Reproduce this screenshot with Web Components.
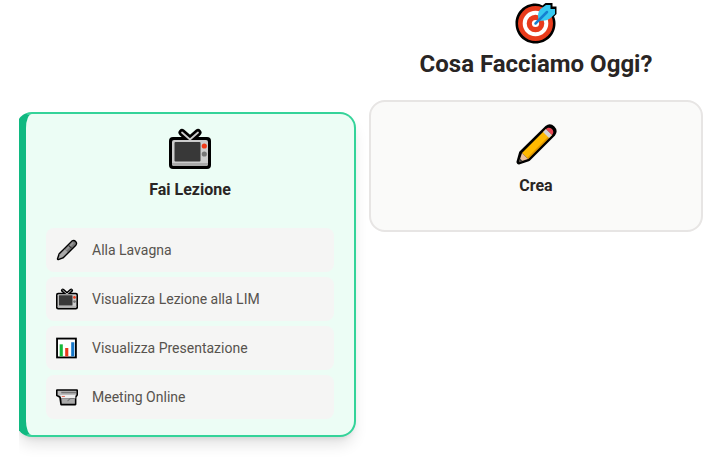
<!DOCTYPE html>
<html lang="it">
<head>
  <meta charset="utf-8">
  <meta name="viewport" content="width=device-width, initial-scale=1">
  <title>Cosa Facciamo Oggi?</title>
  <style>
    body {
      margin: 0;
      background: #fff;
      color: #292524;
      font-family: Roboto, "Liberation Sans", sans-serif;
    }
  </style>
</head>
<body>
  <today-board>
    <action-card slot="lesson" icon="tv" label="Fai Lezione" active>
      <action-item icon="pen">Alla Lavagna</action-item>
      <action-item icon="tv">Visualizza Lezione alla LIM</action-item>
      <action-item icon="chart">Visualizza Presentazione</action-item>
      <action-item icon="camera">Meeting Online</action-item>
    </action-card>
    <board-title slot="title" icon="target">Cosa Facciamo Oggi?</board-title>
    <action-card slot="create" icon="pencil" label="Crea"></action-card>
  </today-board>

  <script>
    // all icons share a 42x42 viewBox
    const ICONS = {
      target: `
        <path d="M20.500 1.500C9 1.500.5 10.500.5 21.500S9 41.500 20.500 41.500s20-9 20-20c0-3-.5-5-1.500-7l2.500-2.500V4.500h-4V1h-7l-3 2.500c-2-1.300-4.500-2-7-2z" fill="#000"/>
        <circle cx="20.500" cy="21.500" r="17.500" fill="#e83b1c"/>
        <circle cx="20.500" cy="21.500" r="10.800" fill="none" stroke="#fff" stroke-width="4"/>
        <circle cx="20.500" cy="21.500" r="3.600" fill="#fff"/>
        <path d="M23.500 17.500c-1-4-.5-8 2-10.500L31 3h4.500v4h4.500v5l-5 4.500c-3 2-7 2.500-10.500 2z" fill="#37c8f0"/>
        <path d="M20.500 21.500L32 10" stroke="#1680d0" stroke-width="2.500" stroke-linecap="round"/>`,
      tv: `
        <path d="M13 4.500L21 11.500 29 4.500" fill="none" stroke="#000" stroke-width="7" stroke-linecap="round" stroke-linejoin="round"/>
        <rect x="0" y="9" width="42" height="32" rx="4" fill="#000"/>
        <path d="M13 4.500L21 11.500 29 4.500" fill="none" stroke="#ccc" stroke-width="1.800" stroke-linecap="round"/>
        <rect x="3" y="12" width="36" height="26" rx="2" fill="#ccc"/>
        <path d="M3 35h36v1a2 2 0 0 1-2 2H5a2 2 0 0 1-2-2z" fill="#aaa"/>
        <rect x="5.500" y="14" width="26" height="19.500" rx="1" fill="#383838"/>
        <circle cx="35.300" cy="18" r="2.600" fill="#f03a17"/>
        <circle cx="35.300" cy="26" r="2.600" fill="#767676"/>`,
      pencil: `
        <path d="M4 38l2.500-9L32 4c4-3 9 2 6 6L13 35z" fill="#000" stroke="#000" stroke-width="5" stroke-linejoin="round"/>
        <path d="M7 29L31 5l6 6-24 24z" fill="#ffb900"/>
        <path d="M12 34L36 10l1 1-24 24z" fill="#dc9300"/>
        <path d="M7 29l6 6-9 3z" fill="#ecc19c"/>
        <path d="M5 34.500L7.500 37 4 38z" fill="#383838"/>
        <path d="M28 8l3-3 6 6-3 3z" fill="#d2d2d2"/>
        <path d="M31 5c4-4 10 2 6 6z" fill="#e74856"/>`,
      pen: `
        <path d="M4 38l3-9L31 5c4-3 9 2 6 6L13 35z" fill="#000" stroke="#000" stroke-width="5" stroke-linejoin="round"/>
        <path d="M4 38l3-9L31 5c4-3 9 2 6 6L13 35z" fill="#777"/>
        <path d="M5 37l3-8 9-9 5 5-9 9z" fill="#aaa"/>
        <path d="M19 21L33 7" stroke="#999" stroke-width="3"/>
        <path d="M24 12l6 6" stroke="#333" stroke-width="2"/>`,
      chart: `
        <rect x="2" y="3" width="36" height="36" fill="#fff" stroke="#000" stroke-width="3.500"/>
        <path d="M7 37V14h6v23z" fill="#16b83b"/>
        <path d="M17.500 37V21h6v16z" fill="#e83b1c"/>
        <path d="M29 37V10h6v27z" fill="#1677c9"/>`,
      camera: `
        <path d="M2 8h38v9l-3 4v14H10l-2-14-6-3z" fill="#000" stroke="#000" stroke-width="4" stroke-linejoin="round"/>
        <path d="M3 9h36v8l-4 3H9l-6-3z" fill="#bbb"/>
        <path d="M10 11h28v3H10z" fill="#777"/>
        <path d="M8 17h29v7H10z" fill="#eee"/>
        <path d="M10 24h26v10H11z" fill="#aaa"/>
        <path d="M11 20h6" stroke="#e8705c" stroke-width="2"/>
        <path d="M22 29l5-5h8" fill="none" stroke="#777" stroke-width="2"/>`
    };

    class EmojiIcon extends HTMLElement {
      constructor() {
        super();
        this.attachShadow({mode: "open"});
      }

      connectedCallback() {
        this.shadowRoot.innerHTML = `
          <style>
            :host {
              display: block;
              flex: none;
              width: var(--icon-size, 42px);
              height: var(--icon-size, 42px);
            }
            svg {
              display: block;
              width: 100%;
              height: 100%;
            }
          </style>
          <svg viewBox="0 0 42 42" aria-hidden="true">${ICONS[this.getAttribute("name")]}</svg>
        `;
      }
    }

    class BoardTitle extends HTMLElement {
      constructor() {
        super();
        this.attachShadow({mode: "open"}).innerHTML = `
          <style>
            :host {
              display: flex;
              flex-direction: column;
              align-items: center;
              gap: 4px;
              padding: 2px 0 20px;
            }
            h1 {
              margin: 0;
              font-size: 24px;
              line-height: 32px;
              font-weight: 700;
              text-align: center;
            }
          </style>
          <emoji-icon name="${this.getAttribute("icon")}"></emoji-icon>
          <h1><slot></slot></h1>
        `;
      }
    }

    class ActionItem extends HTMLElement {
      constructor() {
        super();
        this.attachShadow({mode: "open"}).innerHTML = `
          <style>
            :host {
              display: block;
              --icon-size: 22px;
            }
            button {
              display: flex;
              align-items: center;
              gap: 14px;
              width: 100%;
              min-height: 44px;
              padding: 0 10px;
              border: 0;
              border-radius: 8px;
              background: #f5f5f4;
              color: #57534e;
              font: inherit;
              font-size: 14px;
              line-height: 20px;
              text-align: left;
              cursor: pointer;
            }
            button:hover {
              background: #e7e5e4;
            }
          </style>
          <button type="button">
            <emoji-icon name="${this.getAttribute("icon")}"></emoji-icon>
            <span><slot></slot></span>
          </button>
        `;
      }
    }

    class ActionCard extends HTMLElement {
      constructor() {
        super();
        this.attachShadow({mode: "open"}).innerHTML = `
          <style>
            :host {
              display: block;
            }
            .card {
              padding: 22px 20px 32px;
              border: 2px solid #e7e5e4;
              border-radius: 16px;
              background: #fafaf9;
            }
            .head {
              display: flex;
              flex-direction: column;
              align-items: center;
              gap: 8px;
              width: 100%;
              padding: 0;
              border: 0;
              background: none;
              color: inherit;
              font: inherit;
              font-size: 16px;
              line-height: 24px;
              font-weight: 700;
              cursor: pointer;
            }
            .items {
              display: flex;
              flex-direction: column;
              gap: 5px;
            }

            /* the open card slides left and its edge is cut by the column */
            :host([active]) {
              clip-path: inset(0 -30px -40px 0);
            }
            :host([active]) .card {
              margin-left: -3px;
              padding: 14px 20px 16px;
              border-color: #34d399;
              border-left: 10px solid #10b981;
              background: #ecfdf5;
              box-shadow: 0 10px 15px -3px rgba(0, 0, 0, .12), 0 4px 6px -4px rgba(0, 0, 0, .12);
            }
            :host([active]) .items {
              margin-top: 26px;
            }
          </style>
          <div class="card">
            <button type="button" class="head">
              <emoji-icon name="${this.getAttribute("icon")}"></emoji-icon>
              <span>${this.getAttribute("label")}</span>
            </button>
            <div class="items"><slot></slot></div>
          </div>
        `;
      }
    }

    class TodayBoard extends HTMLElement {
      constructor() {
        super();
        this.attachShadow({mode: "open"}).innerHTML = `
          <style>
            :host {
              display: grid;
              grid-template-columns: 337fr 334fr;
              align-items: start;
              gap: 13px;
              padding: 0 7px 0 19px;
            }
            .left {
              padding: 112px 0 24px;
            }
          </style>
          <section class="left"><slot name="lesson"></slot></section>
          <section><slot name="title"></slot><slot name="create"></slot></section>
        `;
      }
    }

    customElements.define("emoji-icon", EmojiIcon);
    customElements.define("board-title", BoardTitle);
    customElements.define("action-item", ActionItem);
    customElements.define("action-card", ActionCard);
    customElements.define("today-board", TodayBoard);
  </script>
</body>
</html>
